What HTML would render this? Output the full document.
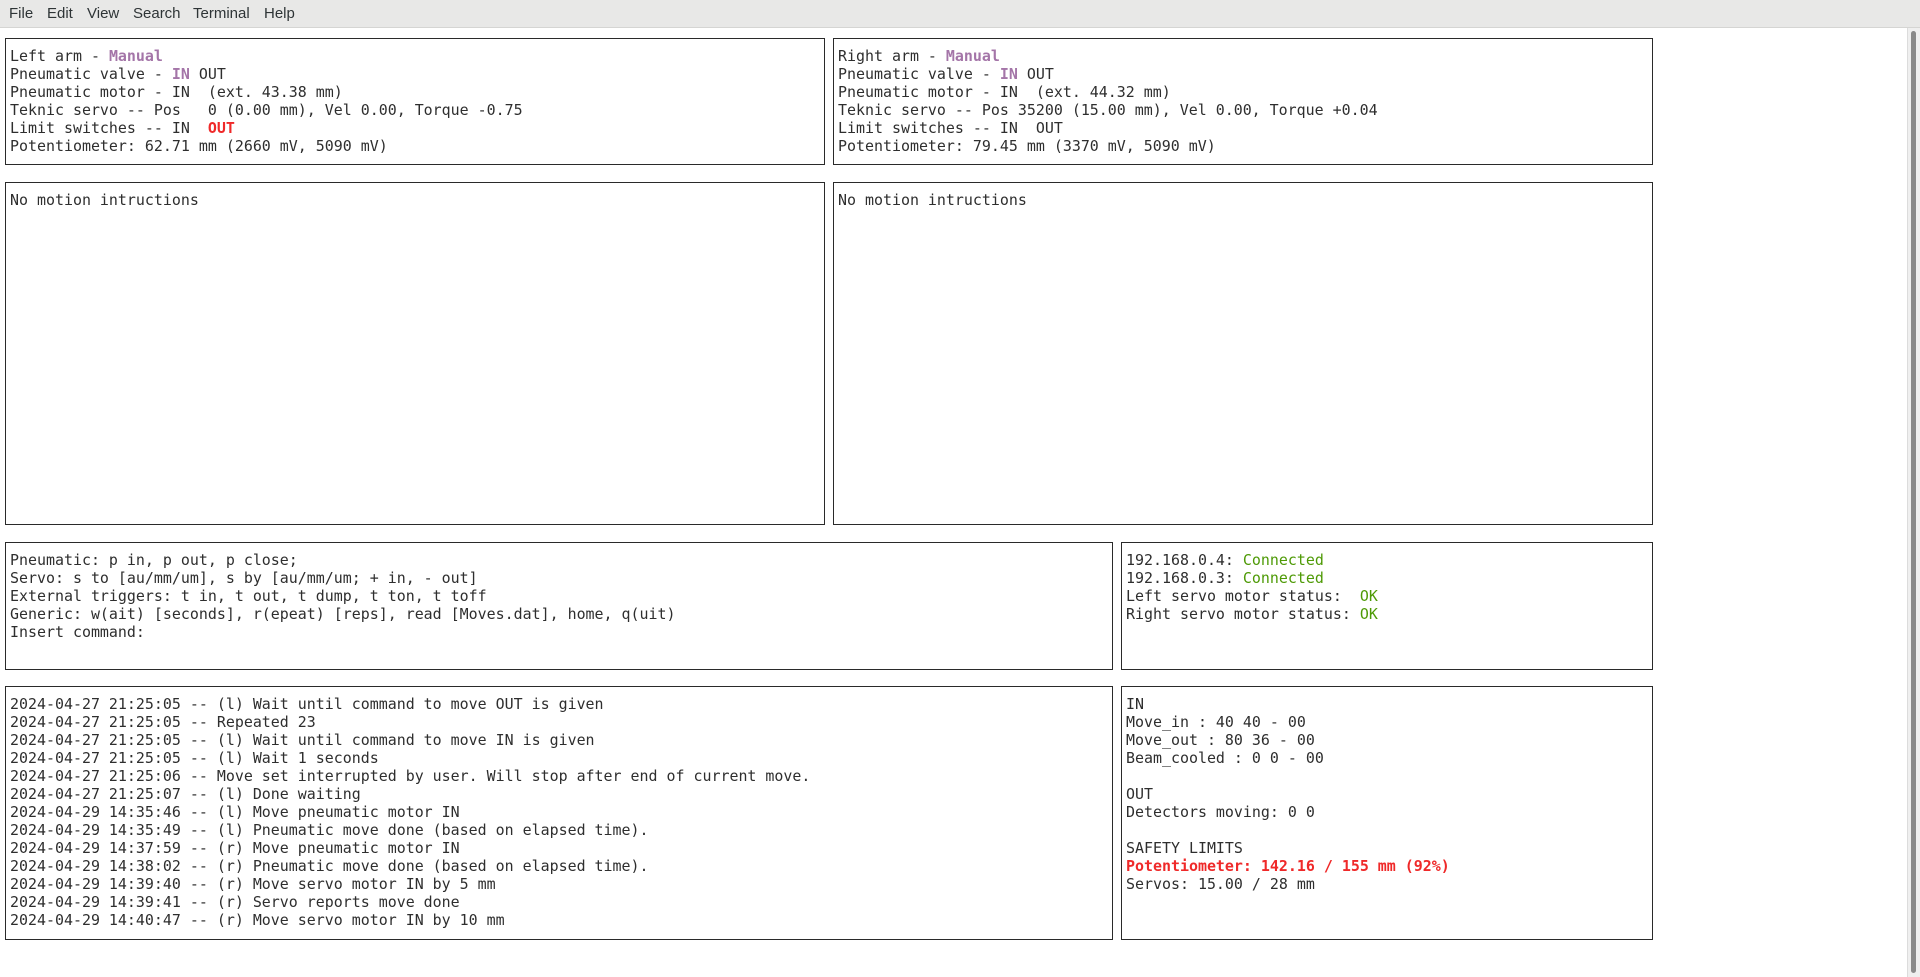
<!DOCTYPE html>
<html><head><meta charset="utf-8"><style>
html,body{margin:0;padding:0;width:1920px;height:977px;background:#fff;overflow:hidden;}
#menu{position:absolute;left:0;top:0;width:1920px;height:27px;background:#e8e8e7;border-bottom:1px solid #d5d5d3;font-family:"Liberation Sans","DejaVu Sans",sans-serif;font-size:15px;color:#2e3436;}
#menu span{position:absolute;top:5px;}
.box{position:absolute;border:1px solid #2a2a2a;box-sizing:border-box;padding:8px 0 0 4px;}
pre{margin:0;font-family:"DejaVu Sans Mono","Liberation Mono",monospace;font-size:14.95px;line-height:18px;color:#2e2e2e;}
.p{color:#a475a8;font-weight:bold}
.r{color:#ef2929;font-weight:bold}
.g{color:#4e9a06}
#sb{position:absolute;left:1907px;top:28px;width:13px;height:949px;background:#efefef;border-left:1px solid #dcdcdc;}
#th{position:absolute;left:1911px;top:31px;width:5px;height:942px;background:#8a8a8a;border-radius:3px;}
</style></head><body>
<div id="menu"><span style="left:9px">File</span><span style="left:47px">Edit</span><span style="left:87px">View</span><span style="left:133px">Search</span><span style="left:193px">Terminal</span><span style="left:264px">Help</span></div>

<div class="box" style="left:5px;top:38px;width:820px;height:127px"><pre>Left arm - <span class="p">Manual</span>
Pneumatic valve - <span class="p">IN</span> OUT
Pneumatic motor - IN  (ext. 43.38 mm)
Teknic servo -- Pos   0 (0.00 mm), Vel 0.00, Torque -0.75
Limit switches -- IN  <span class="r">OUT</span>
Potentiometer: 62.71 mm (2660 mV, 5090 mV)</pre></div>

<div class="box" style="left:833px;top:38px;width:820px;height:127px"><pre>Right arm - <span class="p">Manual</span>
Pneumatic valve - <span class="p">IN</span> OUT
Pneumatic motor - IN  (ext. 44.32 mm)
Teknic servo -- Pos 35200 (15.00 mm), Vel 0.00, Torque +0.04
Limit switches -- IN  OUT
Potentiometer: 79.45 mm (3370 mV, 5090 mV)</pre></div>

<div class="box" style="left:5px;top:182px;width:820px;height:343px"><pre>No motion intructions</pre></div>
<div class="box" style="left:833px;top:182px;width:820px;height:343px"><pre>No motion intructions</pre></div>

<div class="box" style="left:5px;top:542px;width:1108px;height:128px"><pre>Pneumatic: p in, p out, p close;
Servo: s to [au/mm/um], s by [au/mm/um; + in, - out]
External triggers: t in, t out, t dump, t ton, t toff
Generic: w(ait) [seconds], r(epeat) [reps], read [Moves.dat], home, q(uit)
Insert command:</pre></div>

<div class="box" style="left:1121px;top:542px;width:532px;height:128px"><pre>192.168.0.4: <span class="g">Connected</span>
192.168.0.3: <span class="g">Connected</span>
Left servo motor status:  <span class="g">OK</span>
Right servo motor status: <span class="g">OK</span></pre></div>

<div class="box" style="left:5px;top:686px;width:1108px;height:254px"><pre>2024-04-27 21:25:05 -- (l) Wait until command to move OUT is given
2024-04-27 21:25:05 -- Repeated 23
2024-04-27 21:25:05 -- (l) Wait until command to move IN is given
2024-04-27 21:25:05 -- (l) Wait 1 seconds
2024-04-27 21:25:06 -- Move set interrupted by user. Will stop after end of current move.
2024-04-27 21:25:07 -- (l) Done waiting
2024-04-29 14:35:46 -- (l) Move pneumatic motor IN
2024-04-29 14:35:49 -- (l) Pneumatic move done (based on elapsed time).
2024-04-29 14:37:59 -- (r) Move pneumatic motor IN
2024-04-29 14:38:02 -- (r) Pneumatic move done (based on elapsed time).
2024-04-29 14:39:40 -- (r) Move servo motor IN by 5 mm
2024-04-29 14:39:41 -- (r) Servo reports move done
2024-04-29 14:40:47 -- (r) Move servo motor IN by 10 mm</pre></div>

<div class="box" style="left:1121px;top:686px;width:532px;height:254px"><pre>IN
Move_in : 40 40 - 00
Move_out : 80 36 - 00
Beam_cooled : 0 0 - 00

OUT
Detectors moving: 0 0

SAFETY LIMITS
<span class="r">Potentiometer: 142.16 / 155 mm (92%)</span>
Servos: 15.00 / 28 mm</pre></div>

<div id="sb"></div><div id="th"></div>
</body></html>
